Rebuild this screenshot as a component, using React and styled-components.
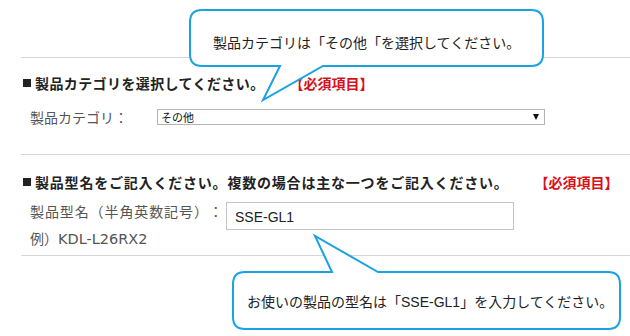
import React from 'react'
import styled, { createGlobalStyle } from 'styled-components'

const GlobalStyle = createGlobalStyle`
  body {
    margin: 0;
    background: #fff;
    font-family: "Open Sans", "Noto Sans CJK JP", sans-serif;
    color: #333;
    text-spacing-trim: space-all;
  }
`;

const Page = styled.div`
  position: relative;
  width: 630px;
  height: 336px;
  overflow: hidden;
  padding: 57px 0 0 21px;
  box-sizing: border-box;
`;

const Section = styled.section`
  border-top: 1px solid #d6d6d6;
  padding: ${(p) => p.$top}px 0 ${(p) => p.$bottom}px 1px;
  &:last-of-type {
    border-bottom: 1px solid #d6d6d6;
  }
`;

const Heading = styled.h2`
  margin: 0;
  display: flex;
  align-items: center;
  font-size: 14px;
  line-height: 20px;
  font-weight: bold;
  color: #222;
  letter-spacing: ${(p) => p.$spacing || 0}px;
  font-family: "Noto Sans CJK JP", sans-serif;
`;

const Square = styled.span`
  display: inline-block;
  width: 8px;
  height: 8px;
  background: #222;
  margin: 0 4px 0 1px;
`;

const Required = styled.span`
  color: #d8101a;
  letter-spacing: 0;
  margin-left: ${(p) => p.$gap}px;
`;

const Row = styled.div`
  display: flex;
  align-items: ${(p) => p.$align || 'center'};
  margin-top: ${(p) => p.$gap}px;
  padding-left: 8px;
`;

const Label = styled.div`
  width: ${(p) => p.$width}px;
  flex-shrink: 0;
  font-size: 14px;
  line-height: ${(p) => p.$lh || 20}px;
  color: #555;
  font-family: "Noto Sans CJK JP", sans-serif;
`;

const LabelLine = styled.span`
  letter-spacing: ${(p) => p.$spacing || 0}px;
`;

const Latin = styled.span`
  font-family: "DejaVu Sans", sans-serif;
  font-size: 14.5px;
`;

const SelectBox = styled.div`
  width: 388px;
  height: 16px;
  box-sizing: border-box;
  border: 1px solid #b4b4b4;
  display: flex;
  align-items: center;
  justify-content: space-between;
  padding: 0 5px 0 3px;
  font-size: 11px;
  color: #111;
  font-family: "Noto Sans CJK JP", sans-serif;
`;

const Arrow = styled.span`
  width: 0;
  height: 0;
  border-left: 3.5px solid transparent;
  border-right: 3.5px solid transparent;
  border-top: 6px solid #111;
`;

const TextInput = styled.input`
  width: 288px;
  height: 28px;
  box-sizing: border-box;
  border: 1px solid #c4c4c4;
  margin-top: 4px;
  padding: 2px 8px 0;
  font-size: 14px;
  font-family: "Liberation Sans", sans-serif;
  color: #222;
  outline: none;
`;

const Bubble = styled.div`
  position: absolute;
  left: ${(p) => p.$x}px;
  top: ${(p) => p.$y}px;
  width: ${(p) => p.$w}px;
  height: ${(p) => p.$h}px;
  svg {
    position: absolute;
    left: 0;
    top: 0;
    overflow: visible;
  }
`;

const BubbleText = styled.div`
  position: absolute;
  left: ${(p) => p.$tx}px;
  top: ${(p) => p.$ty}px;
  white-space: nowrap;
  font-size: 14px;
  line-height: 20px;
  color: #222;
  font-family: "Noto Sans CJK JP", sans-serif;
`;

const BubbleLatin = styled.span`
  font-family: "Liberation Sans", sans-serif;
`;

// bubble outlines are drawn in page coordinates, shifted by the box origin
const CallOut = ({ x, y, w, h, d, tx, ty, children }) => (
  <Bubble $x={x} $y={y} $w={w} $h={h}>
    <svg width={w} height={h} viewBox={`${x} ${y} ${w} ${h}`}>
      <path d={d} fill="#fff" stroke="#1aa2e2" strokeWidth="2" strokeLinejoin="miter" />
    </svg>
    <BubbleText $tx={tx} $ty={ty}>{children}</BubbleText>
  </Bubble>
);

const topBubble =
  'M202 10 H531 Q543 10 543 22 V54 Q543 66 531 66 H323 L263 100 L280 66 H202 Q190 66 190 54 V22 Q190 10 202 10 Z';
const bottomBubble =
  'M245 272 H332 L315 236 L378 272 H608 Q620 272 620 284 V317 Q620 329 608 329 H245 Q233 329 233 317 V284 Q233 272 245 272 Z';

export default function App() {
  return (
    <>
      <GlobalStyle />
      <Page>
        <Section $top={15} $bottom={27}>
          <Heading $spacing={0.4}>
            <Square />
            製品カテゴリを選択してください。
            <Required $gap={25}>【必須項目】</Required>
          </Heading>
          <Row $gap={14}>
            <Label $width={127}>製品カテゴリ：</Label>
            <SelectBox>
              <span>その他</span>
              <Arrow />
            </SelectBox>
          </Row>
        </Section>
        <Section $top={17} $bottom={2}>
          <Heading $spacing={0.8}>
            <Square />
            製品型名をご記入ください。複数の場合は主な一つをご記入ください。
            <Required $gap={26}>【必須項目】</Required>
          </Heading>
          <Row $gap={6} $align="flex-start">
            <Label $width={196} $lh={27}>
              <LabelLine $spacing={0.9}>製品型名（半角英数記号）：</LabelLine>
              <br />
              例）<Latin>KDL-L26RX2</Latin>
            </Label>
            <TextInput defaultValue="SSE-GL1" readOnly />
          </Row>
        </Section>
        <CallOut x={188} y={8} w={358} h={95} d={topBubble} tx={25} ty={24}>
          製品カテゴリは「その他「を選択してください。
        </CallOut>
        <CallOut x={231} y={234} w={392} h={98} d={bottomBubble} tx={16} ty={57}>
          お使いの製品の型名は「<BubbleLatin>SSE-GL1</BubbleLatin>」を入力してください。
        </CallOut>
      </Page>
    </>
  );
}
